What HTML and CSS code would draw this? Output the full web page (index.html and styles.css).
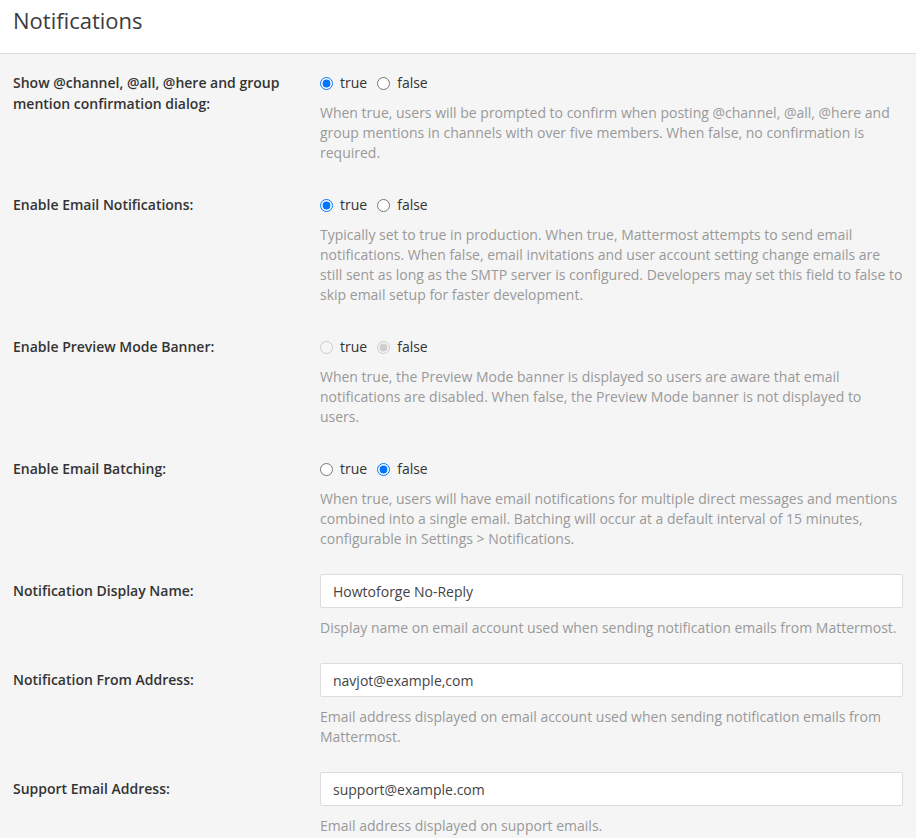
FILE: index.html
```html
<!DOCTYPE html>
<html lang="en">
<head>
<meta charset="utf-8">
<title>Notifications</title>
<link rel="stylesheet" href="styles.css">
</head>
<body>
<div class="page">
  <header class="header">
    <h1 class="title">Notifications</h1>
  </header>
  <div class="content">
    <div class="row">
      <div class="label">Show @channel, @all, @here and group mention confirmation dialog:</div>
      <div class="control">
        <div class="radios">
          <label class="radio"><input type="radio" name="r1" checked>true</label>
          <label class="radio"><input type="radio" name="r1">false</label>
        </div>
        <div class="help">When true, users will be prompted to confirm when posting @channel, @all, @here and group mentions in channels with over five members. When false, no confirmation is required.</div>
      </div>
    </div>
    <div class="row">
      <div class="label">Enable Email Notifications:</div>
      <div class="control">
        <div class="radios">
          <label class="radio"><input type="radio" name="r2" checked>true</label>
          <label class="radio"><input type="radio" name="r2">false</label>
        </div>
        <div class="help">Typically set to true in production. When true, Mattermost attempts to send email notifications. When false, email invitations and user account setting change emails are still sent as long as the SMTP server is configured. Developers may set this field to false to skip email setup for faster development.</div>
      </div>
    </div>
    <div class="row">
      <div class="label">Enable Preview Mode Banner:</div>
      <div class="control">
        <div class="radios">
          <label class="radio"><input type="radio" name="r3" disabled>true</label>
          <label class="radio"><input type="radio" name="r3" checked disabled>false</label>
        </div>
        <div class="help">When true, the Preview Mode banner is displayed so users are aware that email notifications are disabled. When false, the Preview Mode banner is not displayed to users.</div>
      </div>
    </div>
    <div class="row">
      <div class="label">Enable Email Batching:</div>
      <div class="control">
        <div class="radios">
          <label class="radio"><input type="radio" name="r4">true</label>
          <label class="radio"><input type="radio" name="r4" checked>false</label>
        </div>
        <div class="help">When true, users will have email notifications for multiple direct messages and mentions combined into a single email. Batching will occur at a default interval of 15 minutes, configurable in Settings &gt; Notifications.</div>
      </div>
    </div>
    <div class="row">
      <div class="label">Notification Display Name:</div>
      <div class="control control-input">
        <input class="text-input" type="text" value="Howtoforge No-Reply">
        <div class="help">Display name on email account used when sending notification emails from Mattermost.</div>
      </div>
    </div>
    <div class="row">
      <div class="label">Notification From Address:</div>
      <div class="control control-input">
        <input class="text-input" type="text" value="navjot@example,com">
        <div class="help">Email address displayed on email account used when sending notification emails from Mattermost.</div>
      </div>
    </div>
    <div class="row">
      <div class="label">Support Email Address:</div>
      <div class="control control-input">
        <input class="text-input" type="text" value="support@example.com">
        <div class="help">Email address displayed on support emails.</div>
      </div>
    </div>
  </div>
</div>
</body>
</html>
```

FILE: styles.css
```css
html, body {
  margin: 0;
  padding: 0;
}
body {
  background: #f5f5f5;
  font-family: "Open Sans", "Liberation Sans", sans-serif;
  font-size: 14px;
  color: #333333;
}
.page {
  width: 916px;
  min-height: 838px;
}
.header {
  background: #ffffff;
  height: 53px;
  border-bottom: 1px solid #dddddd;
  padding: 5px 13px 0;
  box-sizing: border-box;
  height: 54px;
}
.title {
  margin: 0;
  font-size: 22px;
  font-weight: 400;
  line-height: 30px;
  color: #3d3c40;
}
.content {
  padding: 12px 13px 0;
}
.row {
  display: flex;
  margin-bottom: 25px;
}
.label {
  width: 307px;
  flex: none;
  box-sizing: border-box;
  padding-top: 6px;
  padding-right: 12px;
  font-weight: 600;
  line-height: 21px;
  color: #333333;
}
.control {
  flex: 1;
  min-width: 0;
}
.radios {
  display: flex;
  gap: 10px;
  padding-top: 7px;
  height: 20px;
  line-height: 20px;
}
.radio {
  display: flex;
  align-items: center;
  gap: 7px;
  color: #333333;
}
.radio input {
  width: 13px;
  height: 13px;
  margin: 0;
}
.help {
  margin-top: 10px;
  line-height: 20px;
  color: #999999;
}
.text-input {
  display: block;
  width: 100%;
  height: 34px;
  box-sizing: border-box;
  padding: 6px 12px;
  border: 1px solid #dddddd;
  border-radius: 2px;
  background: #ffffff;
  font-family: "Open Sans", "Liberation Sans", sans-serif;
  font-size: 14px;
  color: #444444;
  outline: none;
}
```
